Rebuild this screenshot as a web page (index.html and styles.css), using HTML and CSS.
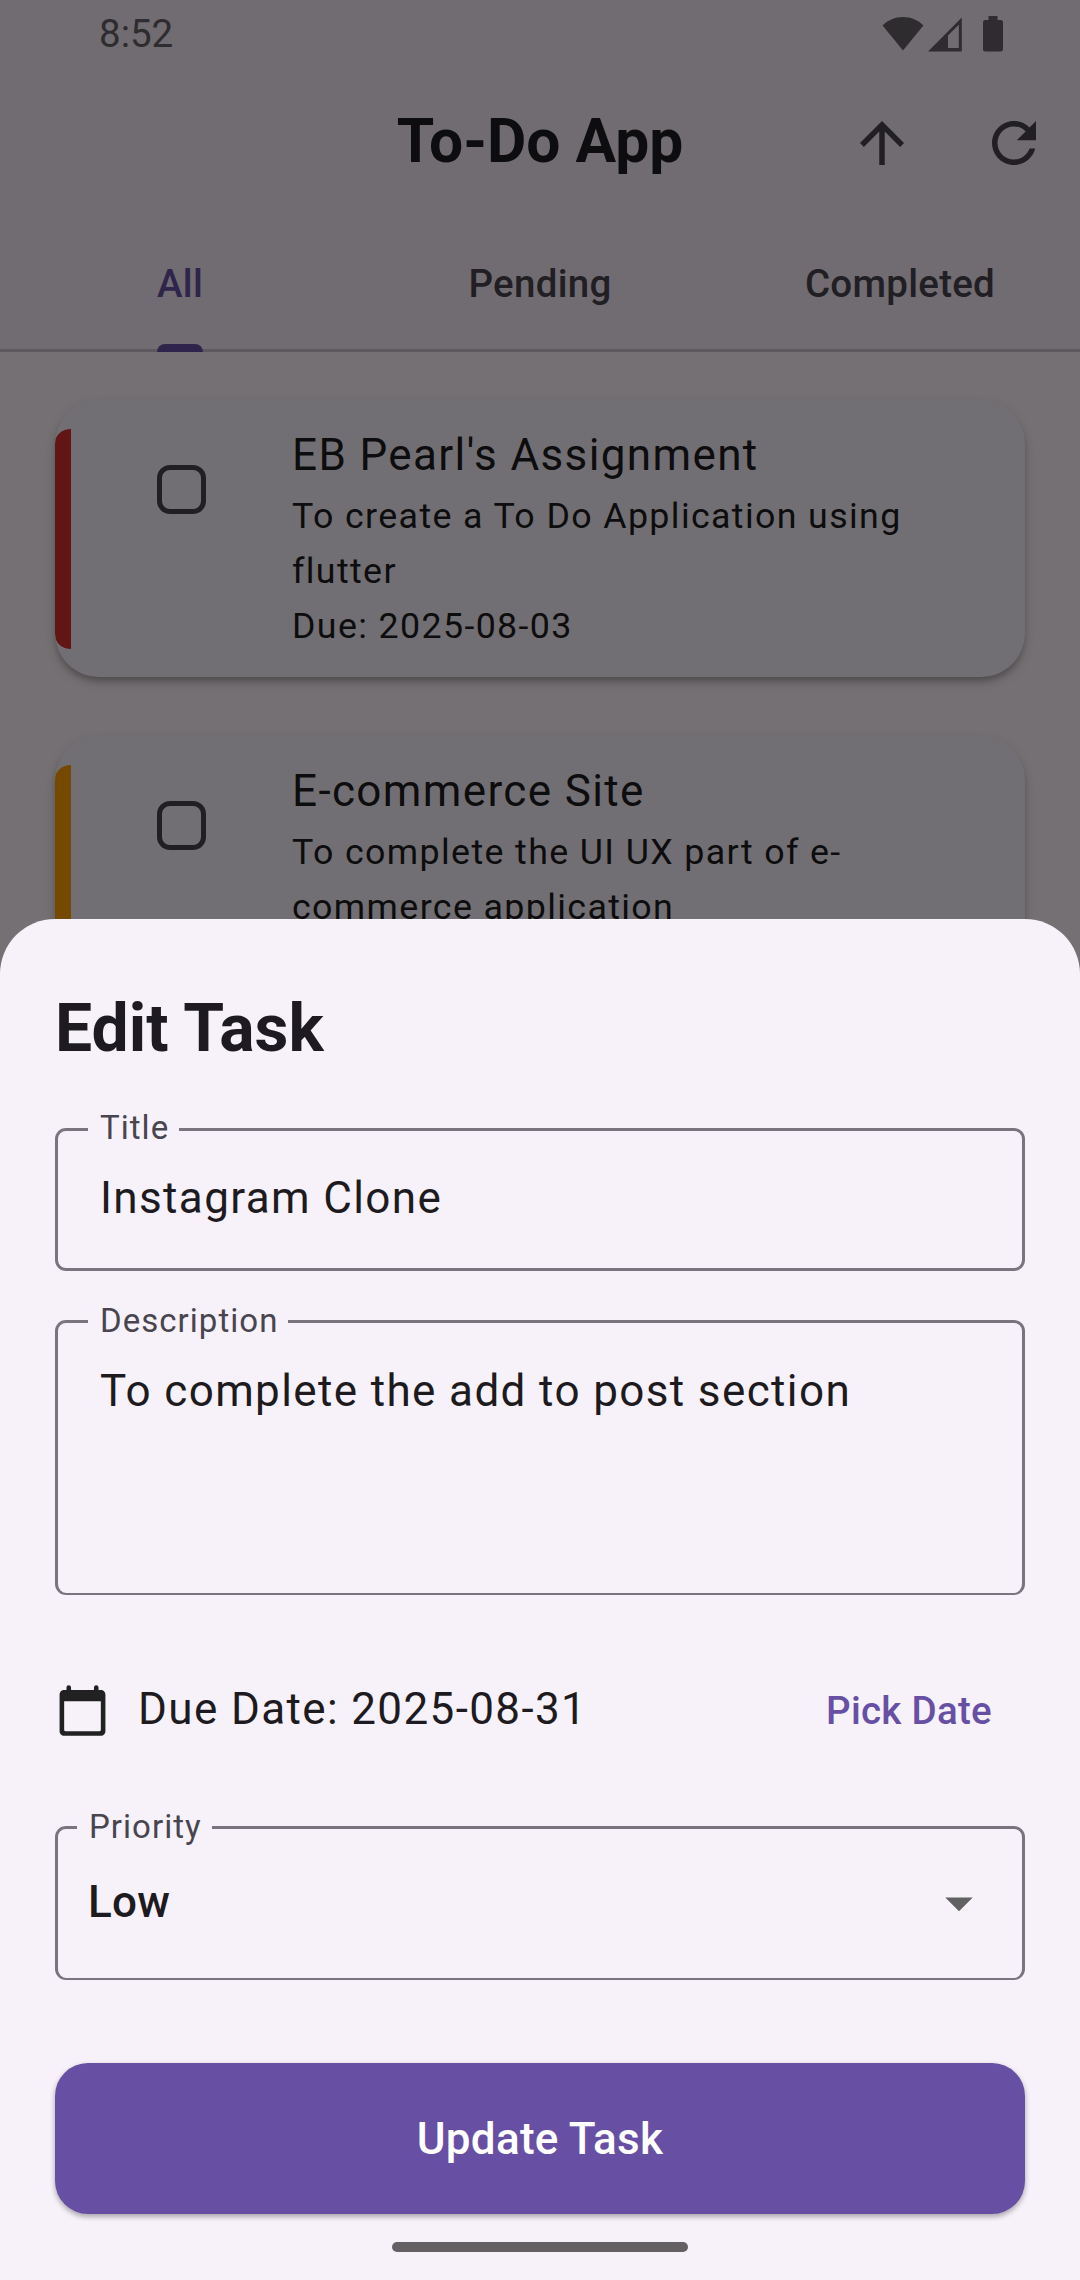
FILE: index.html
```html
<!DOCTYPE html>
<html lang="en">
<head>
<meta charset="utf-8">
<title>To-Do App</title>
<link rel="stylesheet" href="styles.css">
</head>
<body>
<div class="screen">
  <header class="header">
    <div class="status">
      <span class="clock">8:52</span>
      <svg class="status-icons" width="122" height="36" viewBox="0 0 122 36" fill="currentColor">
        <path d="M21 34.5 0.6 9.5C6 4 13 1 21 1s15 3 20.400 8.500z"/>
        <path fill-rule="evenodd" d="M46 35.600 79.800 1.500V35.600zM66 19.500V32h10.800V8.700z"/>
        <path d="M106.500 0h9v4h3.300a2.200 2.200 0 0 1 2.200 2.200v27.100a2.200 2.200 0 0 1-2.200 2.200h-15.600a2.200 2.200 0 0 1-2.200-2.200V6.200a2.200 2.200 0 0 1 2.200-2.200h3.300z"/>
      </svg>
    </div>
    <div class="toolbar">
      <h1 class="app-title">To-Do App</h1>
      <div class="actions">
        <svg class="icon" viewBox="0 0 24 24"><path d="M4 12l1.410 1.410L11 7.830V20h2V7.830l5.580 5.590L20 12l-8-8-8 8z"/></svg>
        <svg class="icon" viewBox="0 0 24 24"><path d="M17.650 6.350C16.200 4.900 14.210 4 12 4c-4.420 0-7.990 3.580-7.990 8s3.570 8 7.990 8c3.730 0 6.840-2.550 7.730-6h-2.080c-.82 2.330-3.040 4-5.650 4-3.310 0-6-2.690-6-6s2.690-6 6-6c1.660 0 3.140.69 4.220 1.780L13 11h7V4l-2.350 2.350z"/></svg>
      </div>
    </div>
    <nav class="tabs">
      <div class="tab tab-active"><span class="tab-label">All</span></div>
      <div class="tab"><span class="tab-label">Pending</span></div>
      <div class="tab"><span class="tab-label">Completed</span></div>
    </nav>
  </header>
  <main class="tasks">
    <article class="task">
      <div class="priority-bar high"></div>
      <div class="checkbox"></div>
      <div class="task-text">
        <h2 class="task-title">EB Pearl's Assignment</h2>
        <p class="task-sub">To create a To Do Application using flutter</p>
        <p class="task-sub">Due: 2025-08-03</p>
      </div>
    </article>
    <article class="task">
      <div class="priority-bar medium"></div>
      <div class="checkbox"></div>
      <div class="task-text">
        <h2 class="task-title">E-commerce Site</h2>
        <p class="task-sub">To complete the UI UX part of e-commerce application</p>
      </div>
    </article>
  </main>
  <div class="scrim"></div>
  <section class="sheet">
    <h2 class="sheet-title">Edit Task</h2>
    <div class="field field-title">
      <span class="field-label">Title</span>
      <span class="field-value">Instagram Clone</span>
    </div>
    <div class="field field-desc">
      <span class="field-label">Description</span>
      <span class="field-value">To complete the add to post section</span>
    </div>
    <div class="due">
      <svg class="calendar" viewBox="0 0 24 24"><path fill-rule="evenodd" d="M20 3h-1V2a1 1 0 0 0-2 0v1H7V2a1 1 0 0 0-2 0v1H4c-1.100 0-2 .9-2 2v16c0 1.100.9 2 2 2h16c1.100 0 2-.9 2-2V5c0-1.100-.9-2-2-2zM19.500 21h-15a.5.5 0 0 1-.5-.5V8h16v12.500a.5.5 0 0 1-.5.500z"/></svg>
      <span class="due-text">Due Date: 2025-08-31</span>
      <span class="pick">Pick Date</span>
    </div>
    <div class="field field-priority">
      <span class="field-label">Priority</span>
      <span class="field-value">Low</span>
      <svg class="icon" viewBox="0 0 24 24"><path d="M7 10l5 5 5-5z"/></svg>
    </div>
    <button class="submit">Update Task</button>
    <div class="home-bar"></div>
  </section>
</div>
</body>
</html>
```

FILE: styles.css
```css
* {
  box-sizing: border-box;
}

body {
  margin: 0;
  font-family: Roboto, sans-serif;
  color: #1d1b20;
}

h1, h2, p {
  margin: 0;
  font-weight: 400;
}

.screen {
  position: relative;
  width: 1080px;
  height: 2280px;
  overflow: hidden;
  background: #fff5fb;
}

.icon {
  display: block;
  width: 66px;
  height: 66px;
  fill: currentColor;
}

/* Header */
.header {
  height: 352px;
  background: #f5ecf7;
}

.status {
  display: flex;
  justify-content: space-between;
  height: 66px;
  padding: 0 76px 0 99px;
  color: #646065;
}

.clock {
  font-size: 38.5px;
  line-height: 68px;
}

.status-icons {
  margin-top: 16px;
}

.toolbar {
  display: grid;
  grid-template-columns: 1fr auto 1fr;
  align-items: center;
  height: 154px;
}

.app-title {
  grid-column: 2;
  padding-bottom: 2px;
  font-size: 60.5px;
  font-weight: 700;
  line-height: 72px;
}

.actions {
  display: flex;
  justify-content: flex-end;
  gap: 66px;
  padding-right: 33px;
  color: #49454f;
}

.tabs {
  display: grid;
  grid-template-columns: repeat(3, 1fr);
  height: 132px;
  border-bottom: 3px solid #cac4d0;
}

.tab {
  display: flex;
  justify-content: center;
  height: 132px;
  font-size: 38.5px;
  font-weight: 500;
  letter-spacing: 0.275px;
  line-height: 128px;
  color: #49454f;
}

.tab-label {
  position: relative;
}

.tab-active {
  color: #6750a4;
}

.tab-active .tab-label::after {
  content: "";
  position: absolute;
  left: 0;
  right: 0;
  bottom: 0;
  height: 8px;
  border-radius: 8px 8px 0 0;
  background: #6750a4;
}

/* Task list */
.tasks {
  display: flex;
  flex-direction: column;
  gap: 59px;
  padding: 48px 55px 0;
}

.task {
  display: flex;
  align-items: flex-start;
  height: 277px;
  overflow: hidden;
  border-radius: 44px;
  background: #f7f2fa;
  box-shadow: 0 5px 6px -1px rgba(0, 0, 0, 0.22), 0 5px 14px rgba(0, 0, 0, 0.14);
}

.priority-bar {
  width: 16px;
  height: 220px;
  margin-top: 29px;
  border-radius: 16px 0 0 16px / 14px 0 0 14px;
}

.high {
  background: #d32f2f;
}

.medium {
  background: #ffa000;
}

.checkbox {
  width: 49px;
  height: 49px;
  margin: 65px 86px 0 86px;
  border: 5px solid #49454f;
  border-radius: 13px;
}

.task-text {
  flex: 1;
  padding: 24px 66px 0 0;
}

.task-title {
  margin-bottom: 3px;
  font-size: 44px;
  letter-spacing: 1.375px;
  line-height: 62px;
}

.task-sub {
  font-size: 35.75px;
  letter-spacing: 1.375px;
  line-height: 55px;
}

.scrim {
  position: absolute;
  inset: 0;
  background: rgba(0, 0, 0, 0.54);
}

/* Edit sheet */
.sheet {
  position: absolute;
  inset: 919px 0 0;
  padding: 70px 55px 0;
  border-radius: 55px 55px 0 0;
  background: #f7f2fa;
}

.sheet-title {
  font-size: 66px;
  font-weight: 700;
  line-height: 80px;
}

.field {
  position: relative;
  border: 3px solid #79747e;
  border-radius: 11px;
}

.field-label {
  position: absolute;
  top: -22px;
  left: 30px;
  padding: 0 10px 0 12px;
  background: #f7f2fa;
  color: #49454f;
  font-size: 33px;
  letter-spacing: 1.03px;
  line-height: 39px;
}

.field-value {
  font-size: 44px;
  letter-spacing: 1.375px;
  line-height: 60px;
}

.field-title {
  height: 143px;
  margin-top: 59px;
  padding: 37px 42px 0;
}

.field-title .field-label {
  top: -23px;
}

.field-desc {
  height: 275px;
  margin-top: 49px;
  padding: 38px 42px 0;
  border-bottom-width: 2px;
}

.due {
  display: flex;
  align-items: center;
  height: 130px;
  margin: 49px 0 52px;
}

.calendar {
  width: 55px;
  height: 55px;
  margin: 3px 28px 0 0;
  fill: #212121;
}

.due-text {
  font-size: 44px;
  letter-spacing: 1.375px;
  line-height: 60px;
}

.pick {
  margin-left: auto;
  padding: 2px 33px 0 0;
  color: #6750a4;
  font-size: 38.5px;
  font-weight: 500;
  letter-spacing: 0.275px;
  line-height: 55px;
}

.field-priority {
  display: flex;
  justify-content: space-between;
  align-items: flex-start;
  height: 154px;
  padding: 43px 30px 0;
  border-bottom-width: 2px;
}

.field-priority .field-label {
  left: 19px;
}

.field-priority .field-value {
  font-weight: 500;
  letter-spacing: 0.2px;
}

.field-priority .icon {
  margin-top: -2px;
  color: #616161;
}

.submit {
  display: block;
  width: 100%;
  height: 151px;
  margin-top: 83px;
  padding: 0;
  border: 0;
  border-radius: 33px;
  background: #6750a4;
  box-shadow: 0 3px 5px rgba(0, 0, 0, 0.22), 0 2px 6px rgba(0, 0, 0, 0.12);
  color: #fff;
  font-family: inherit;
  font-size: 44px;
  font-weight: 500;
  letter-spacing: 0.275px;
}

.home-bar {
  width: 296px;
  height: 10px;
  margin: 28px auto 0;
  border-radius: 5px;
  background: #646165;
}
```
